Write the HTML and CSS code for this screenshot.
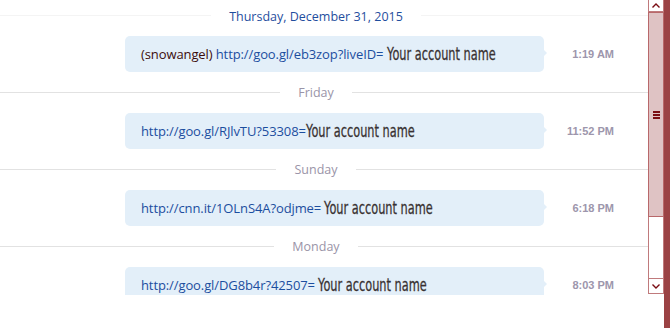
FILE: index.html
```html
<!DOCTYPE html>
<html lang="en">
<head>
    <meta charset="UTF-8">
    <title>Chat history</title>
    <link rel="stylesheet" href="styles.css">
</head>
<body>
    <div class="window">
        <!-- message list -->
        <div class="chat-pane">
            <div class="day-title"><span>Thursday, December 31, 2015</span></div>

            <div class="message">
                <div class="bubble"><span class="nick">(snowangel)</span> <span class="link">http://goo.gl/eb3zop?liveID=</span> <span class="account">Your account name</span></div>
                <div class="time">1:19 AM</div>
            </div>

            <div class="divider"><span>Friday</span></div>

            <div class="message">
                <div class="bubble"><span class="link">http://goo.gl/RJlvTU?53308=</span><span class="account">Your account name</span></div>
                <div class="time">11:52 PM</div>
            </div>

            <div class="divider"><span>Sunday</span></div>

            <div class="message">
                <div class="bubble"><span class="link">http://cnn.it/1OLnS4A?odjme=</span> <span class="account">Your account name</span></div>
                <div class="time">6:18 PM</div>
            </div>

            <div class="divider"><span>Monday</span></div>

            <div class="message">
                <div class="bubble"><span class="link">http://goo.gl/DG8b4r?42507=</span> <span class="account">Your account name</span></div>
                <div class="time">8:03 PM</div>
            </div>
        </div>

        <!-- scrollbar -->
        <div class="scrollbar">
            <div class="scroll-btn">
                <svg width="8" height="5" viewBox="0 0 8 5"><path d="M0.5 4.5 L4 1 L7.5 4.5" fill="none" stroke="#7a0c12" stroke-width="1.4"/></svg>
            </div>
            <div class="scroll-thumb">
                <div class="grip"><i></i><i></i><i></i></div>
            </div>
            <div class="scroll-track"></div>
            <div class="scroll-btn">
                <svg width="8" height="5" viewBox="0 0 8 5"><path d="M0.5 0.5 L4 4 L7.5 0.5" fill="none" stroke="#7a0c12" stroke-width="1.4"/></svg>
            </div>
        </div>

        <div class="edge"></div>
    </div>
</body>
</html>
```

FILE: styles.css
```css
* {
    margin: 0;
    padding: 0;
    box-sizing: border-box;
}

body {
    width: 670px;
    height: 328px;
    background: #fff;
    font-family: "Open Sans", "Noto Sans", sans-serif;
    overflow: hidden;
}

.window {
    display: flex;
    height: 328px;
}

.chat-pane {
    width: 648px;
    height: 295px;
    overflow: hidden;
}

/* day headers */
.day-title {
    height: 36px;
    padding-right: 16px;
    display: flex;
    justify-content: center;
    align-items: center;
    padding-bottom: 4px;
    background: linear-gradient(#f4f4f4, #f4f4f4) 0 15px / 100% 1px no-repeat;
    font-size: 12.5px;
    color: #1f4e9e;
}

.day-title span {
    background: #fff;
    padding: 0 18px;
}

.divider {
    height: 41px;
    padding-right: 16px;
    display: flex;
    justify-content: center;
    align-items: center;
    background: linear-gradient(#e2e2e2, #e2e2e2) 0 20px / 100% 1px no-repeat;
    font-size: 12.5px;
    color: #9a94a8;
}

.divider span {
    background: #fff;
    padding: 0 18px;
}

/* messages */
.message {
    display: flex;
    align-items: center;
    padding-left: 125px;
}

.bubble {
    position: relative;
    width: 419px;
    height: 36px;
    padding: 0 16px;
    line-height: 36px;
    white-space: nowrap;
    background: #e3eff9;
    border-radius: 5px;
    font-size: 13px;
    letter-spacing: -0.1px;
}

.bubble::after {
    content: "";
    position: absolute;
    right: -3px;
    top: 14px;
    border-left: 3px solid #e3eff9;
    border-top: 3px solid transparent;
    border-bottom: 3px solid transparent;
}

.nick {
    color: #3c0c0c;
}

.link {
    color: #1c4e9f;
}

.account {
    display: inline-block;
    transform: scaleX(0.63);
    transform-origin: left center;
    font-family: "DejaVu Sans", sans-serif;
    font-size: 18px;
    letter-spacing: 0;
    color: #383131;
    vertical-align: top;
    -webkit-text-stroke: 0.3px #383131;
}

.time {
    flex: 1;
    text-align: right;
    padding-right: 34px;
    font-family: "Liberation Sans", Arial, sans-serif;
    font-weight: bold;
    font-size: 11px;
    color: #9d96ac;
}

/* scrollbar */
.scrollbar {
    width: 16px;
    height: 294px;
    display: flex;
    flex-direction: column;
}

.scroll-btn {
    height: 16px;
    border: 1px solid #c07a7c;
    background: #fff;
    display: flex;
    align-items: center;
    justify-content: center;
}

.scroll-btn:first-child {
    height: 12px;
    border-top: none;
}

.scroll-thumb {
    height: 205px;
    background: #dfc3c4;
    border: 1px solid #b8686a;
    display: flex;
    align-items: center;
    justify-content: center;
}

.grip {
    display: flex;
    flex-direction: column;
    gap: 1px;
}

.grip i {
    display: block;
    width: 7px;
    height: 2px;
    background: #7a0c12;
}

.scroll-track {
    flex: 1;
    background: #fff;
    border-left: 1px solid #c07a7c;
    border-right: 1px solid #c07a7c;
}

.edge {
    width: 6px;
    height: 328px;
    background: #9b4244;
}
```
